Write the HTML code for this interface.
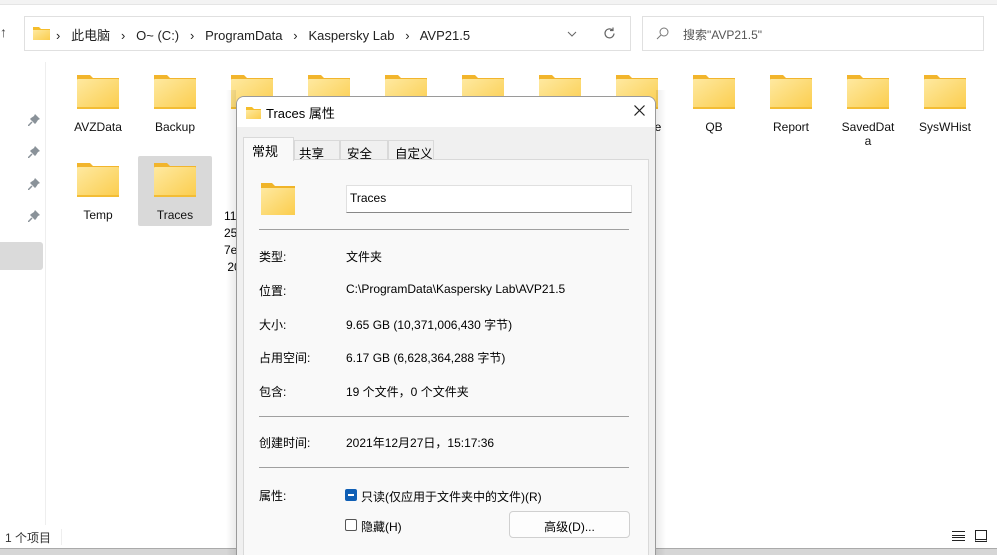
<!DOCTYPE html>
<html><head><meta charset="utf-8"><style>
*{margin:0;padding:0;box-sizing:border-box}
html,body{width:997px;height:555px;overflow:hidden}
body{background:#fff;font-family:"Liberation Sans","Noto Sans CJK SC",sans-serif;font-size:12px;color:#000;position:relative}
.a{position:absolute;white-space:nowrap}
.fold{position:absolute;width:42px;height:34px}
.lbl{position:absolute;width:74px;text-align:center;font-size:12px;color:#111}
.row{position:absolute;left:259px;font-size:12px}
.val{position:absolute;left:346px;font-size:12px}
.hr{position:absolute;left:259px;width:370px;height:1px;background:#a0a0a0}
.tab{position:absolute;top:43px;height:20px;background:#f0f0f0;border:1px solid #d9d9d9;padding:2px 0 0 6px;font-size:12.5px;white-space:nowrap;overflow:hidden}
</style></head><body>
<svg width="0" height="0" style="position:absolute"><defs><linearGradient id="g" x1="0" y1="0" x2="1" y2="1"><stop offset="0" stop-color="#fee9a0"/><stop offset="1" stop-color="#fbcd4d"/></linearGradient></defs></svg>
<div class="a" style="left:0;top:0;width:997px;height:5px;background:#f3f3f3;border-bottom:1px solid #e5e5e5"></div>
<div class="a" style="left:0;top:24px;font-size:14px;color:#444">↑</div>
<div class="a" style="left:24px;top:16px;width:607px;height:35px;border:1px solid #e0e0e0;background:#fff"></div>
<svg class="a" style="left:33px;top:26px" width="17" height="14"><path d="M0 1h6l2 2h9v11H0z" fill="#f5bd2b"/><rect y="4" width="17" height="10" fill="url(#g)"/></svg>
<div class="a" style="left:56px;top:25px;font-size:13px;color:#222;white-space:pre">›   此电脑   ›   O~ (C:)   ›   ProgramData   ›   Kaspersky Lab   ›   AVP21.5</div>
<svg class="a" style="left:567px;top:31px" width="10" height="6"><path d="M1 1l4 4 4-4" stroke="#666" fill="none"/></svg>
<svg class="a" style="left:603px;top:27px" width="13" height="13"><path d="M11 6.5A4.5 4.5 0 1 1 9.5 3M10 0.5v3h-3" stroke="#666" fill="none" stroke-width="1.2"/></svg>
<div class="a" style="left:642px;top:16px;width:342px;height:35px;border:1px solid #e0e0e0"></div>
<svg class="a" style="left:656px;top:27px" width="13" height="13"><circle cx="8" cy="5" r="4" stroke="#777" fill="none"/><path d="M5 8l-4 4" stroke="#777"/></svg>
<div class="a" style="left:683px;top:26px;font-size:12px;color:#555">搜索"AVP21.5"</div>
<div class="a" style="left:45px;top:62px;width:1px;height:463px;background:#eee"></div>
<div id="pins"></div>
<div class="a" style="left:0;top:242px;width:43px;height:28px;background:#dadada;border-radius:0 3px 3px 0"></div>
<div class="a" style="left:138px;top:156px;width:74px;height:70px;background:#d9d9d9;border-radius:2px"></div>
<div id="f"></div>
<div class="a" style="left:5px;top:529px;font-size:12px;color:#333">1 个项目</div>
<div class="a" style="left:61px;top:529px;width:1px;height:16px;background:#eee"></div>
<div class="a" style="left:952px;top:531px;width:13px;height:10px;border-top:1px solid #222;border-bottom:1px solid #222"><div style="margin-top:3px;border-top:1px solid #222;height:3px;border-bottom:1px solid #222"></div></div>
<div class="a" style="left:975px;top:530px;width:12px;height:12px;border:1px solid #222;border-bottom-width:3px;border-bottom-style:double"></div>
<div class="a" style="left:0;top:548px;width:997px;height:7px;background:#d6d6d6;border-top:1px solid #aaa"></div>
<div class="a" style="left:226px;top:90px;width:440px;height:465px;background:linear-gradient(90deg,rgba(0,0,0,0),rgba(0,0,0,.08) 10px,rgba(0,0,0,0) 10px,rgba(0,0,0,0) 430px,rgba(0,0,0,.08) 430px,rgba(0,0,0,0))"></div>
<div class="a" style="left:236px;top:96px;width:420px;height:470px;background:#f0f0f0;border:1px solid #9a9a9a;border-radius:8px 8px 0 0;overflow:hidden">
 <div class="a" style="left:0;top:0;width:420px;height:30px;background:#fff"></div>
 <svg class="a" style="left:9px;top:10px" width="15" height="12"><path d="M0 0h6l2 2h7v10H0z" fill="#f5bd2b"/><rect y="3" width="15" height="9" fill="url(#g)"/></svg>
 <div class="a" style="left:29px;top:6px;font-size:13px">Traces 属性</div>
 <svg class="a" style="left:397px;top:8px" width="11" height="11"><path d="M0.5 0.5l10 10M10.5 0.5l-10 10" stroke="#222" stroke-width="1.2"/></svg>
 <div class="a" style="left:6px;top:62px;width:406px;height:420px;background:#f9f9f9;border:1px solid #d9d9d9"></div>
 <div class="tab" style="left:57px;width:46px;padding-left:4px">共享</div>
 <div class="tab" style="left:103px;width:48px">安全</div>
 <div class="tab" style="left:151px;width:46px;padding-left:6px">自定义</div>
 <div class="a" style="left:6px;top:40px;width:51px;height:24px;background:#f9f9f9;border:1px solid #d9d9d9;border-bottom:none;padding:3px 0 0 8px;font-size:13px">常规</div>
 <svg class="a" style="left:24px;top:86px" width="34" height="32"><path d="M0 0h11l3 3h20v29H0z" fill="#f0b429"/><rect y="5" width="34" height="27" fill="url(#g)"/></svg>
 <div class="a" style="left:109px;top:88px;width:286px;height:28px;background:#fff;border:1px solid #e0e0e0;border-bottom:1px solid #888;padding:5px 3px;font-size:12px">Traces</div>
</div>
<div class="hr" style="top:229px"></div>
<div class="row" style="top:248px">类型:</div><div class="val" style="top:248px">文件夹</div>
<div class="row" style="top:282px">位置:</div><div class="val" style="top:282px">C:\ProgramData\Kaspersky Lab\AVP21.5</div>
<div class="row" style="top:316px">大小:</div><div class="val" style="top:316px">9.65 GB (10,371,006,430 字节)</div>
<div class="row" style="top:349px">占用空间:</div><div class="val" style="top:349px">6.17 GB (6,628,364,288 字节)</div>
<div class="row" style="top:383px">包含:</div><div class="val" style="top:383px">19 个文件，0 个文件夹</div>
<div class="hr" style="top:416px"></div>
<div class="row" style="top:434px">创建时间:</div><div class="val" style="top:434px">2021年12月27日，15:17:36</div>
<div class="hr" style="top:467px"></div>
<div class="row" style="top:487px">属性:</div>
<div class="a" style="left:345px;top:489px;width:12px;height:12px;background:#0f5fb5;border-radius:2px"><div style="margin:5px 3px;height:1.5px;background:#fff"></div></div>
<div class="a" style="left:361px;top:488px;font-size:12px">只读(仅应用于文件夹中的文件)(R)</div>
<div class="a" style="left:345px;top:519px;width:12px;height:12px;border:1px solid #555;border-radius:2px;background:#fff"></div>
<div class="a" style="left:361px;top:518px;font-size:12px">隐藏(H)</div>
<div class="a" style="left:509px;top:511px;width:121px;height:27px;background:#fdfdfd;border:1px solid #d0d0d0;border-radius:4px;text-align:center;padding-top:6px;font-size:12px">高级(D)...</div>
<script>
var F='<path d="M0 0h13l3 3h26v31H0z" fill="#f2b52c"/><rect y="4" width="42" height="30" rx="1" fill="url(#g)"/><rect y="32" width="42" height="2" fill="#f3bd35"/>';
var xs=[77,154,231,308,385,462,539,616,693,770,847,924],h='';
var n1=['AVZData','Backup','','','','','','','QB','Report','SavedDat<br>a','SysWHist'];
xs.forEach(function(x,i){h+='<svg class="fold" style="left:'+x+'px;top:75px" viewBox="0 0 42 34">'+F+'</svg>';if(n1[i])h+='<div class="lbl" style="left:'+(x-16)+'px;top:120px">'+n1[i]+'</div>';});
[77,154].forEach(function(x){h+='<svg class="fold" style="left:'+x+'px;top:163px" viewBox="0 0 42 34">'+F+'</svg>';});
h+='<div class="lbl" style="left:61px;top:208px">Temp</div><div class="lbl" style="left:138px;top:208px">Traces</div>';
h+='<div class="a" style="left:224px;top:208px;line-height:17px;font-size:12px">11<br>25<br>7e<br>&nbsp;20</div><div class="a" style="left:648px;top:120px;font-size:12px">ne</div>';
document.getElementById('f').innerHTML=h;
var p='';[114,146,178,210].forEach(function(y){p+='<svg class="a" style="left:28px;top:'+y+'px" width="12" height="12"><path d="M7 0l5 5-2 1-2 3-1 1-5-5 1-1 3-2z" fill="#8a9299"/><path d="M4 8L0 12" stroke="#8a9299" stroke-width="1.5"/></svg>';});
document.getElementById('pins').innerHTML=p;
</script>
</body></html>
